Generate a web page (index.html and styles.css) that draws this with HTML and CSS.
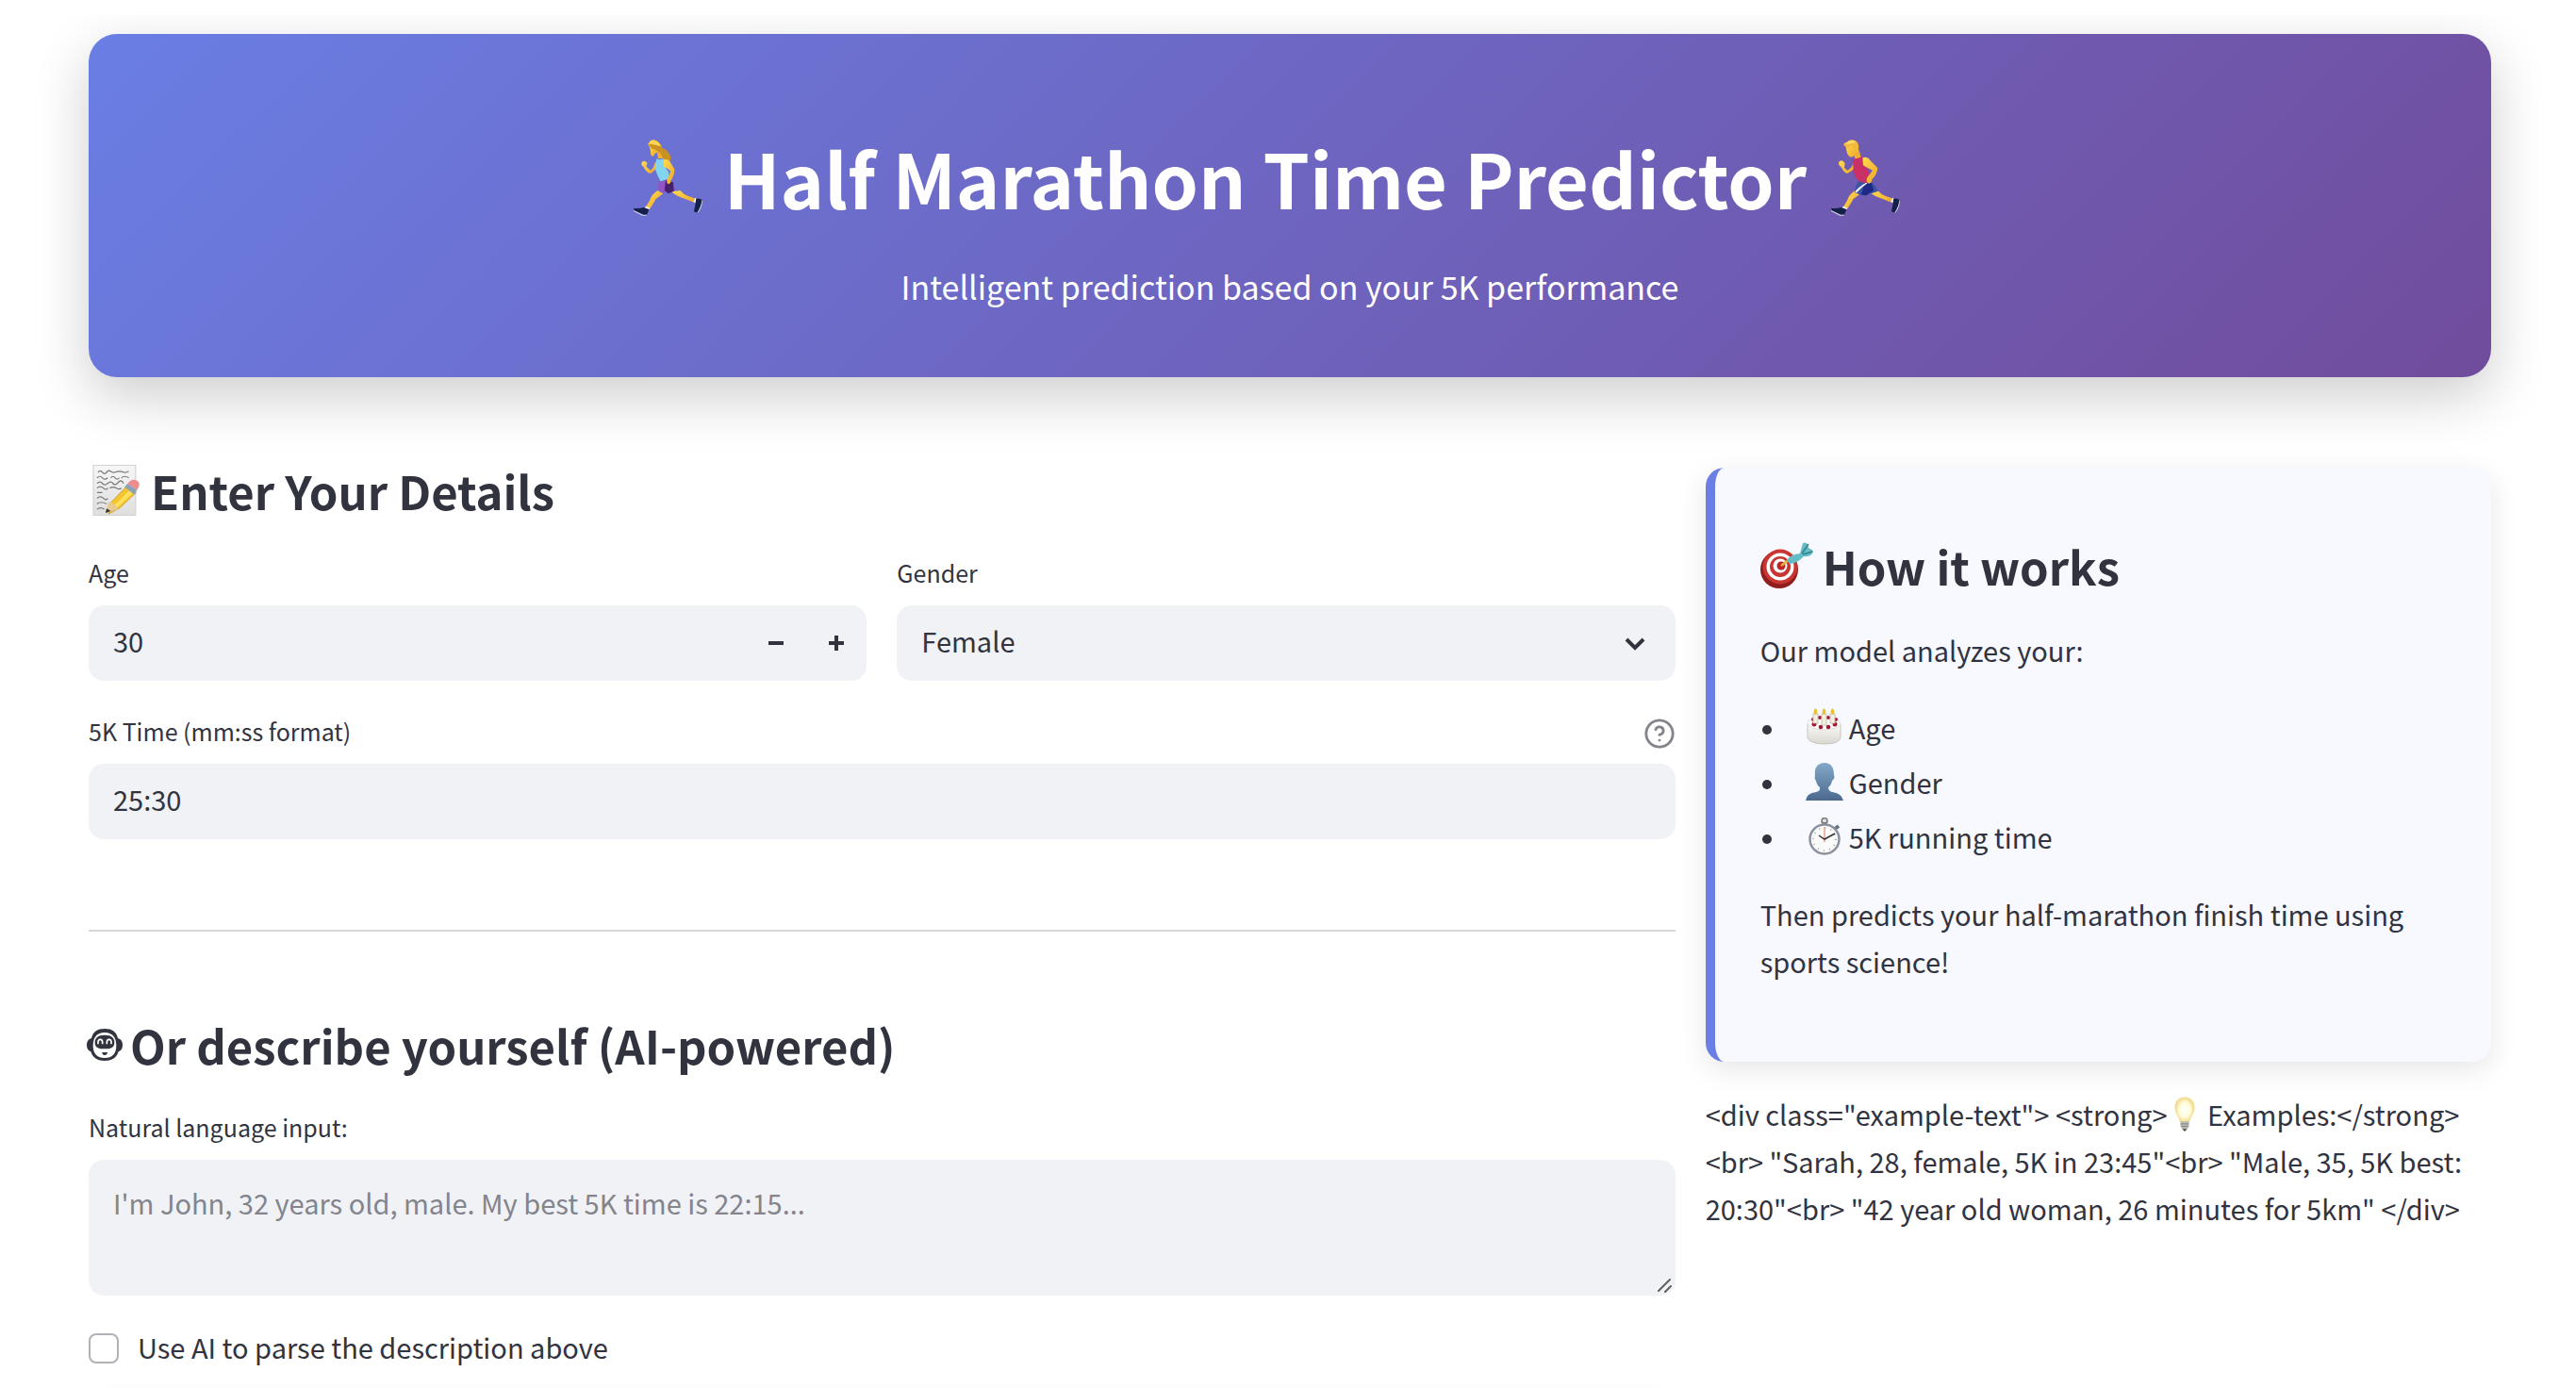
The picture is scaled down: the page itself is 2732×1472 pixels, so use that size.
FILE: index.html
```html
<!DOCTYPE html>
<html lang="en">
<head>
<meta charset="utf-8">
<meta name="viewport" content="width=device-width, initial-scale=1">
<title>Half Marathon Time Predictor</title>
<link rel="stylesheet" href="styles.css">
</head>
<body>
<svg class="defs" aria-hidden="true">
  <defs>
    <linearGradient id="skin" x1="0" y1="0" x2="1" y2="1"><stop offset="0" stop-color="#ffdc50"/><stop offset="1" stop-color="#eda52a"/></linearGradient>
    <linearGradient id="bust" x1="0" y1="0" x2="0" y2="1"><stop offset="0" stop-color="#83a9c8"/><stop offset="1" stop-color="#4b698d"/></linearGradient>
    <radialGradient id="glow"><stop offset="0" stop-color="#fffffa"/><stop offset=".6" stop-color="#fffbdc"/><stop offset="1" stop-color="#f2dc86"/></radialGradient>
    <linearGradient id="cake" x1="0" y1="0" x2="0" y2="1"><stop offset="0" stop-color="#fbfaf7"/><stop offset="1" stop-color="#d9d7d0"/></linearGradient>
    <linearGradient id="sheet" x1="0" y1="0" x2="0" y2="1"><stop offset="0" stop-color="#f6f6f6"/><stop offset="1" stop-color="#dedede"/></linearGradient>
    <g id="legs">
      <path d="M106 186 Q86 200 82 216 L68 240 L80 246 Q96 224 100 214 L124 196Z" fill="url(#skin)"/>
      <path d="M150 190 Q172 208 192 212 L226 226 L228 212 L204 204 Q190 200 178 186Z" fill="url(#skin)"/>
      <path d="M68 236 L81 241 L78 248 L65 243Z" fill="#f4f4fa"/>
      <path d="M226 209 L220 222 L228 226 L233 212Z" fill="#f4f4fa"/>
      <path d="M31 242 Q48 244 62 240 L79 246 L73 262 Q68 266 60 263 L31 249Z" fill="#15204a"/>
      <path d="M30 249 L60 263 L72 263 L70 266 L58 266 L30 252Z" fill="#d8d8e4"/>
      <path d="M229 211 Q240 212 249 216 Q248 236 236 255 Q226 258 222 252 L226 232Z" fill="#15204a"/>
      <path d="M249 217 Q249 238 236 256 L232 257 Q245 238 247 217Z" fill="#d8d8e4"/>
    </g>
  </defs>
</svg>

<main class="page">
  <header class="hero">
    <h1 class="hero-title">
      <svg class="runner" viewBox="0 0 270 288" aria-hidden="true">
        <use href="#legs"/>
        <path d="M100 94 Q92 118 84 122 Q74 116 70 108 L74 100 Q68 88 58 94 Q50 104 62 112 Q72 132 84 132 Q96 124 106 110Z" fill="url(#skin)"/>
        <path d="M104 60 L124 60 L124 84 L108 84Z" fill="#eeaf32"/>
        <path d="M76 38 Q88 18 106 30 L120 46 Q112 66 98 68 L92 78 Q82 74 84 64 L82 52Z" fill="url(#skin)"/>
        <path d="M78 40 Q80 22 98 26 Q116 30 120 50 Q142 58 146 76 Q152 86 144 94 Q134 96 122 82 Q118 66 98 56 Q84 54 78 40Z" fill="#c99223"/>
        <path d="M78 38 Q82 22 98 26 Q114 32 116 46 Q98 38 78 38Z" fill="#ffd452"/>
        <path d="M104 84 Q112 92 124 84 Q126 110 142 128 L142 148 L116 158 Q106 140 98 116 Q98 98 104 84Z" fill="#82d4ef"/>
        <path d="M110 158 L136 152 Q160 168 164 184 L150 190 L136 182 L124 196 L106 182Z" fill="#9354c6"/>
        <path d="M132 154 L156 160 L158 188 L140 196 L128 186Z" fill="#47206e"/>
        <path d="M124 88 Q142 84 150 102 L160 118 Q160 142 148 154 Q150 164 140 166 Q132 160 138 148 L148 126 Q138 114 126 110Z" fill="url(#skin)"/>
      </svg>
      <span>Half Marathon Time Predictor</span>
      <svg class="runner" viewBox="0 0 270 288" aria-hidden="true">
        <use href="#legs"/>
        <path d="M102 98 Q94 116 82 122 L72 114 L74 100 Q66 86 56 94 Q50 104 62 112 Q72 132 82 132 Q98 124 108 110Z" fill="url(#skin)"/>
        <path d="M100 60 L118 56 Q122 70 126 82 L106 86Z" fill="#eeaf32"/>
        <path d="M76 42 Q88 24 108 32 Q120 44 114 62 Q106 78 92 80 Q82 76 80 64Z" fill="url(#skin)"/>
        <path d="M70 42 Q68 34 80 32 Q92 20 108 28 Q122 36 116 58 L108 68 Q104 56 98 44 Q90 42 88 50 Q76 50 70 42Z" fill="#f3b83d"/>
        <path d="M76 36 Q92 22 108 30 Q104 38 92 36 Q82 42 76 36Z" fill="#ffdc68"/>
        <path d="M102 86 Q118 84 128 78 L140 86 Q140 112 154 136 L152 164 Q132 168 118 156 Q100 140 100 106Z" fill="#c93065"/>
        <path d="M118 156 Q136 166 160 160 Q172 172 180 188 L158 196 L142 190 L128 202 L104 192Q106 170 118 156Z" fill="#3b54a5"/>
        <path d="M136 162 L158 162 L166 186 L142 202 L126 200Z" fill="#202a86"/>
        <path d="M140 162 L146 163 Q124 178 110 194 L106 190 Q116 176 140 162Z" fill="#f2f2fa"/>
        <path d="M130 82 Q146 76 156 92 L178 114 Q176 138 160 150 Q160 162 150 164 Q140 158 144 146 L162 122 Q140 112 132 106Z" fill="url(#skin)"/>
      </svg>
    </h1>
    <p class="hero-sub">Intelligent prediction based on your 5K performance</p>
  </header>

  <div class="columns">
    <section class="form-col">
      <h2 class="heading">
        <svg class="emoji-lg" viewBox="0 1 50 57" preserveAspectRatio="none" aria-hidden="true">
          <rect x="4.500" y="2.500" width="40" height="54" fill="url(#sheet)" stroke="#d2d2d2"/>
          <path d="M9 10q2-3 4 0t4 0t4-1t4 1t4-1t4 1t5-1M8 16q3-3 5 0t5 0M21 16q2-3 4 0t4 0M31 16q3-3 7 0M8 22q3-3 5 0t5 0t5 0t5-1t5 1M8 27q3-3 6 0t4 0M20 27q3-2 6 0t5 0M8 32h5M8 38q3-3 6 0t4 0M8 44q3-3 9 0M8 50q3-3 7 0" fill="none" stroke="#777" stroke-width="1.200"/>
          <path d="M19 55 L20 44 L36 25 L45 32 L29 49Z" fill="#f2c531" stroke="#b98a20" stroke-width=".6"/>
          <path d="M24 46 L40 28 L43 31 L27 48Z" fill="#ffe05a"/>
          <path d="M16 54 L19 42 Q24 42 28 50Z" fill="#e8c990"/>
          <path d="M16 54 L17 49 L21 52Z" fill="#333"/>
          <path d="M34 26 L37 22 L46 29 L43 34Z" fill="#8fa3b3"/>
          <path d="M37 22 Q41 16 46 19 Q50 22 46 29Z" fill="#ee8d90"/>
        </svg>
        <span>Enter Your Details</span>
      </h2>

      <div class="field-row">
        <div class="field">
          <label class="label" for="age">Age</label>
          <div class="control">
            <input class="input" id="age" type="text" inputmode="numeric" value="30">
            <button class="step" type="button" aria-label="Decrease age"><svg width="24" height="24" viewBox="0 0 24 24" aria-hidden="true"><path d="M4 12h16" stroke="currentColor" stroke-width="4"/></svg></button>
            <button class="step" type="button" aria-label="Increase age"><svg width="24" height="24" viewBox="0 0 24 24" aria-hidden="true"><path d="M4 12h16M12 4v16" stroke="currentColor" stroke-width="4"/></svg></button>
          </div>
        </div>
        <div class="field">
          <label class="label" for="gender">Gender</label>
          <div class="control">
            <select class="input" id="gender"><option>Female</option><option>Male</option></select>
            <svg class="chevron" viewBox="0 0 24 24" aria-hidden="true"><path d="M3 8l9 9 9-9" fill="none" stroke="currentColor" stroke-width="4"/></svg>
          </div>
        </div>
      </div>

      <div class="field">
        <div class="label-row">
          <label class="label" for="time">5K Time (mm:ss format)</label>
          <button class="help" type="button" aria-label="Help"><svg viewBox="0 0 24 24" fill="none" stroke="currentColor" stroke-width="2" stroke-linecap="round" stroke-linejoin="round" aria-hidden="true"><circle cx="12" cy="12" r="10"/><path d="M9.090 9a3 3 0 0 1 5.830 1c0 2-3 3-3 3M12 17h.01"/></svg></button>
        </div>
        <div class="control"><input class="input" id="time" type="text" value="25:30"></div>
      </div>

      <hr class="rule">

      <h2 class="heading heading-ai">
        <svg class="robot" viewBox="0 0 114 102" aria-hidden="true">
          <path d="M57 0C82 0 94 10 99 30Q114 34 114 52Q114 68 101 73C94 94 78 102 57 102S20 94 13 73Q0 68 0 52Q0 34 15 30C20 10 32 0 57 0Z" fill="#31333f"/>
          <path d="M57 12C82 12 94 28 94 54C94 80 80 93 57 93S20 80 20 54C20 28 32 12 57 12Z" fill="#fff"/>
          <path d="M57 20C80 20 88 30 88 44C88 60 76 64 57 64S26 60 26 44C26 30 34 20 57 20Z" fill="#31333f"/>
          <path d="M36 49V43Q36 34 43 34T50 43V49M64 49V43Q64 34 71 34T78 43V49" fill="none" stroke="#fff" stroke-width="5"/>
          <path d="M49 75H66Q65 84 57 84T49 75Z" fill="#31333f"/>
        </svg>
        <span>Or describe yourself (AI-powered)</span>
      </h2>

      <div class="field">
        <label class="label" for="about">Natural language input:</label>
        <div class="control">
          <textarea class="input area" id="about" placeholder="I'm John, 32 years old, male. My best 5K time is 22:15..."></textarea>
          <svg class="grip" viewBox="0 0 16 16" aria-hidden="true"><path d="M2 14L14 2M9 15L15 9" stroke="#606060" stroke-width="2" stroke-linecap="round"/></svg>
        </div>
      </div>

      <label class="check"><input class="check-box" type="checkbox"><span>Use AI to parse the description above</span></label>
      <div class="next-card"></div>
    </section>

    <aside class="side-col">
      <div class="info-card">
        <h2 class="heading heading-card">
          <svg class="emoji-lg" viewBox="0 0 56 56" aria-hidden="true">
            <ellipse cx="20" cy="32" rx="20" ry="20" fill="#8e1f1c"/>
            <ellipse cx="21" cy="29" rx="18.500" ry="18.500" fill="#c93530"/>
            <circle cx="21" cy="29" r="14.500" fill="#fff"/><circle cx="21" cy="29" r="11" fill="#c93530"/><circle cx="21" cy="28" r="7.500" fill="#fff"/><circle cx="22" cy="28" r="4.500" fill="#b82522"/>
            <path d="M22 28L31 21" stroke="#e2b23c" stroke-width="2.500"/>
            <path d="M28 22Q32 16 42 15L45 4Q50 2 51 9L56 12Q55 19 46 18Q40 25 31 26Z" fill="#64bdc6"/>
            <path d="M44 15L51 5M45 16L55 13" stroke="#2f838c" stroke-width="1.500"/>
          </svg>
          <span>How it works</span>
        </h2>
        <p class="text">Our model analyzes your:</p>
        <ul class="factors">
          <li>
            <svg class="emoji" viewBox="0 0 40 40" aria-hidden="true">
              <path d="M2 17V31Q4 38 20 38T37 31V17Z" fill="url(#cake)" stroke="#c9c6be"/>
              <ellipse cx="19.500" cy="16" rx="17.500" ry="7" fill="#fff" stroke="#dcdad4"/>
              <g fill="#a51835"><circle cx="9" cy="17" r="2.500"/><circle cx="16" cy="20" r="2.300"/><circle cx="24" cy="20" r="2.300"/><circle cx="31" cy="17" r="2.500"/><circle cx="15" cy="10" r="2"/><circle cx="24" cy="10" r="2"/><circle cx="8" cy="12" r="2"/><circle cx="32" cy="12" r="2"/></g>
              <g fill="#f4eee0" stroke="#bfb7a4" stroke-width=".8"><rect x="8" y="6" width="5" height="10"/><rect x="17" y="6" width="5" height="12"/><rect x="26" y="6" width="5" height="10"/></g>
              <path d="M10.500 0q4 4 0 7q-4-3 0-7M19.500 0q4 4 0 7q-4-3 0-7M28.500 0q4 4 0 7q-4-3 0-7" fill="#e6c22e"/>
            </svg>
            <span>Age</span>
          </li>
          <li>
            <svg class="emoji" viewBox="0 0 40 40" aria-hidden="true"><path d="M20 0C27 0 30 5 30 13Q31 14 30 17L28 19Q27 24 24 26Q24 30 28 31Q38 32 40 40H0Q1 32 11 31Q16 30 15 26Q12 24 11 19Q9 17 10 13C9 5 13 0 20 0Z" fill="url(#bust)"/></svg>
            <span>Gender</span>
          </li>
          <li>
            <svg class="emoji" viewBox="0 0 40 40" aria-hidden="true">
              <circle cx="20" cy="3.500" r="3" fill="#ddd" stroke="#777" stroke-width="1.500"/><path d="M18 5h4v4h-4z" fill="#777"/><path d="M31 12l4-3" stroke="#697488" stroke-width="4"/>
              <circle cx="20" cy="23" r="15.500" fill="#fbfbfb" stroke="#8b929d" stroke-width="2.500"/>
              <circle cx="20" cy="23" r="12" fill="none" stroke="#aaa" stroke-width="2" stroke-dasharray="1 5.283"/>
              <path d="M20 26V10" stroke="#e8a48c" stroke-width="1.500"/><path d="M14 19L20 23L31 17" fill="none" stroke="#333" stroke-width="1.500"/>
            </svg>
            <span>5K running time</span>
          </li>
        </ul>
        <p class="text">Then predicts your half-marathon finish time using sports science!</p>
      </div>
      <p class="text example">&lt;div class="example-text"&gt; &lt;strong&gt;<svg class="bulb" viewBox="0 0 40 40" aria-hidden="true"><path d="M20 0C28 0 32 6 31 14C30 20 26 23 25 29H15C14 23 10 20 9 14C8 6 12 0 20 0Z" fill="url(#glow)" stroke="#eed98a"/><path d="M15 28h10v6l-2 3h-6l-2-3z" fill="#b9b9b4"/><path d="M15 31h10M16 34h8" stroke="#808080"/><path d="M17 37h6l-3 3z" fill="#444"/></svg> Examples:&lt;/strong&gt;&lt;br&gt; "Sarah, 28, female, 5K in 23:45"&lt;br&gt; "Male, 35, 5K best: 20:30"&lt;br&gt; "42 year old woman, 26 minutes for 5km" &lt;/div&gt;</p>
    </aside>
  </div>
</main>
</body>
</html>
```
FILE: styles.css
```css
* { box-sizing: border-box; }

body {
  margin: 0;
  background: #fff;
  color: #31333f;
  font-family: "Noto Sans CJK SC", "Noto Sans", sans-serif;
  font-size: 29px;
  line-height: 50px;
}

h1, h2, p, ul { margin: 0; padding: 0; }
svg { display: block; flex: none; }
.defs { position: absolute; width: 0; height: 0; }

/* scroll area holding the whole app */
.page {
  height: 100vh;
  overflow: auto;
  scrollbar-width: none;
  padding: 36px 90px 0 94px;
}

.hero {
  padding: 98px 64px 66px;
  border-radius: 30px;
  background: linear-gradient(135deg, #6a7ee4 0%, #714c9c 100%);
  box-shadow: 0 20px 60px rgba(0, 0, 0, .2);
  clip-path: inset(-20px -94px -100px -94px);
  color: #fff;
  text-align: center;
}
.hero-title {
  display: flex;
  justify-content: center;
  align-items: center;
  gap: 16px;
  padding-right: 52px;
  font-size: 79px;
  line-height: 108px;
  font-weight: 700;
}
.runner { width: 90px; height: 96px; }
.hero-sub { margin-top: 32px; font-size: 34px; line-height: 60px; }

.columns { display: flex; gap: 32px; margin-top: 86px; }
.form-col { flex: 2 1 16px; min-width: 0; }
.side-col { flex: 1 1 0; min-width: 0; padding-top: 10px; }

.heading {
  display: flex;
  align-items: center;
  gap: 10px;
  margin-bottom: 32px;
  font-size: 49px;
  line-height: 68px;
  font-weight: 600;
}
.heading-card { margin-bottom: 30px; }
.heading-ai { gap: 8px; }
.emoji-lg { width: 56px; height: 56px; }
.robot { width: 38px; height: 34px; margin-left: -2px; }

.field-row { display: flex; gap: 32px; margin-bottom: 32px; }
.field { flex: 1 1 0; min-width: 0; }
.label { display: block; margin-bottom: 14px; font-size: 25px; line-height: 42px; }
.label-row { display: flex; justify-content: space-between; align-items: flex-start; }
.help { display: block; margin: 7px 0 0; padding: 0; border: 0; background: none; color: #83848c; }
.help svg { width: 34px; height: 34px; }

.control {
  position: relative;
  display: flex;
  border-radius: 16px;
  background: #f0f2f6;
  overflow: hidden;
}
.input {
  flex: 1;
  min-width: 0;
  height: 80px;
  margin: 0;
  padding: 0 26px 6px;
  border: 0;
  outline: 0;
  appearance: none;
  background: none;
  color: inherit;
  font: inherit;
}
.step {
  display: flex;
  align-items: center;
  justify-content: center;
  width: 64px;
  padding: 0;
  border: 0;
  background: none;
  color: inherit;
}
.chevron { position: absolute; right: 31px; top: 28px; width: 24px; height: 24px; pointer-events: none; }
.area { height: 144px; padding: 20px 26px; resize: none; }
.area::placeholder { color: #83848c; opacity: 1; }
.grip { position: absolute; right: 4px; bottom: 3px; width: 16px; height: 16px; pointer-events: none; }

.rule { height: 2px; margin: 96px 0 86px; border: 0; background: #d6d6d9; }

.check { display: flex; gap: 20px; margin-top: 32px; line-height: 44px; }
.check-box {
  appearance: none;
  flex: none;
  width: 32px;
  height: 32px;
  margin: 8px 0 0;
  border: 2px solid #b0b1b7;
  border-radius: 8px;
  background: #fff;
}
.next-card { height: 80px; margin-top: 34px; border-radius: 30px; box-shadow: 0 8px 30px rgba(0, 0, 0, .1); }

.info-card {
  padding: 70px 48px 82px;
  border-left: 10px solid #6a7ee4;
  border-radius: 20px;
  background: #f8f9ff;
  box-shadow: 0 8px 30px rgba(0, 0, 0, .1);
}
.factors { display: grid; gap: 8px; margin: 32px 0; list-style: none; }
.factors li { display: flex; align-items: center; gap: 6px; }
.factors li::before {
  content: "";
  width: 10px;
  height: 10px;
  margin: 6px 30px 0 2px;
  border-radius: 50%;
  background: #31333f;
}
.emoji { width: 40px; height: 40px; }
.example { margin-top: 30px; }
.bulb { display: inline-block; width: 36px; height: 40px; vertical-align: -8px; }
```
